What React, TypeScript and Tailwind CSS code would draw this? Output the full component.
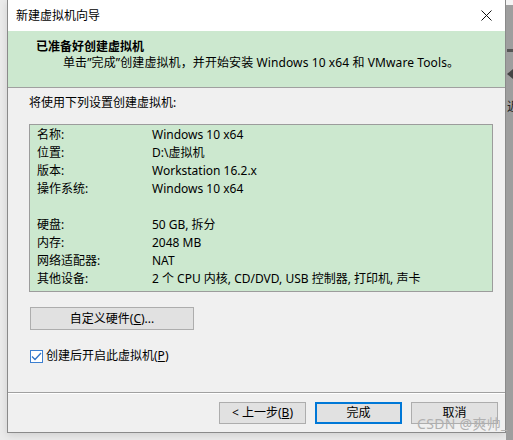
import React from 'react';

const font = { fontFamily: '"Noto Sans", "Noto Sans CJK SC", sans-serif' };

type Row = { label: string; value: string } | null;

const rows: Row[] = [
  { label: '名称:', value: 'Windows 10 x64' },
  { label: '位置:', value: 'D:\\虚拟机' },
  { label: '版本:', value: 'Workstation 16.2.x' },
  { label: '操作系统:', value: 'Windows 10 x64' },
  null,
  { label: '硬盘:', value: '50 GB, 拆分' },
  { label: '内存:', value: '2048 MB' },
  { label: '网络适配器:', value: 'NAT' },
  { label: '其他设备:', value: '2 个 CPU 内核, CD/DVD, USB 控制器, 打印机, 声卡' },
];

const WinButton: React.FC<{ children: React.ReactNode; primary?: boolean; className?: string }> = ({
  children,
  primary,
  className = '',
}) => (
  <button
    className={`h-[22px] bg-[#e1e1e1] text-[12px] text-black flex items-center justify-center leading-none ${
      primary ? 'border-2 border-[#0078d7]' : 'border border-[#adadad]'
    } ${className}`}
  >
    {children}
  </button>
);

export default function App() {
  return (
    <div className="w-[513px] h-[440px] bg-[#ebebeb] flex overflow-hidden relative" style={font}>
      <div className="w-[7px] shrink-0" />

      {/* wizard window */}
      <div className="w-[499px] h-[433px] shrink-0 flex flex-col bg-[#f0f0f0] border-x border-b border-[#8a8a8a] shadow-[0_2px_8px_rgba(0,0,0,0.12)]">
        {/* title bar */}
        <div className="h-[31px] bg-white flex items-center justify-between pl-[8px] pr-[9px] shrink-0">
          <span className="text-[12px] text-black">新建虚拟机向导</span>
          <svg width="11" height="11" viewBox="0 0 11 11" className="mr-[4px]">
            <path d="M0.5 0.5 L10.5 10.5 M10.5 0.5 L0.5 10.5" stroke="#111" strokeWidth="1" />
          </svg>
        </div>

        {/* header */}
        <div className="h-[57px] bg-[#cce8cf] border-b border-[#a0a0a0] shrink-0 flex flex-col pt-[7px]">
          <div className="pl-[28px] text-[12px] font-bold text-black leading-[18px]">已准备好创建虚拟机</div>
          <div className="pl-[55px] text-[12px] text-black leading-[18px] mt-[-2px] tracking-[0.1px]">
            单击”完成”创建虚拟机，并开始安装 Windows 10 x64 和 VMware Tools。
          </div>
        </div>

        {/* body */}
        <div className="flex-1 flex flex-col pt-[6px]">
          <div className="pl-[21px] text-[12px] leading-[18px] text-black">将使用下列设置创建虚拟机:</div>

          <div className="ml-[21px] mt-[12px] w-[464px] h-[168px] bg-[#cce8cf] border border-[#9c9c9c] pt-[1px] pl-[7px]">
            {rows.map((r, i) =>
              r ? (
                <div key={i} className="flex h-[18px] items-center text-[12px] text-black">
                  <span className="w-[115px] shrink-0">{r.label}</span>
                  <span>{r.value}</span>
                </div>
              ) : (
                <div key={i} className="h-[18px]" />
              )
            )}
          </div>

          <WinButton className="ml-[22px] mt-[15px] w-[164px] h-[23px]">
            自定义硬件(<span className="underline">C</span>)...
          </WinButton>

          <div className="ml-[22px] mt-[17px] flex items-center gap-[3px]">
            <div className="w-[13px] h-[13px] border border-[#3c7fd0] bg-white flex items-center justify-center">
              <svg width="11" height="9" viewBox="0 0 11 9">
                <path d="M1 4.5 L4 7.5 L10 1" stroke="#2f73c7" strokeWidth="1.3" fill="none" />
              </svg>
            </div>
            <span className="text-[12px] text-black leading-[18px]">
              创建后开启此虚拟机(<span className="underline">P</span>)
            </span>
          </div>
        </div>

        {/* footer */}
        <div className="h-[40px] shrink-0 border-t border-[#a0a0a0] flex flex-col">
          <div className="h-px bg-white" />
          <div className="flex justify-end gap-[9px] pr-[7px] pt-[8px]">
            <WinButton className="w-[87px]">
              &lt; 上一步(<span className="underline">B</span>)
            </WinButton>
            <WinButton primary className="w-[87px]">完成</WinButton>
            <WinButton className="w-[87px]">取消</WinButton>
          </div>
        </div>
      </div>

      {/* neighbouring window edge */}
      <div className="w-[7px] shrink-0 flex flex-col overflow-hidden">
        <div className="h-[5px] bg-[#f4f4f4]" />
        <div className="flex-1 bg-[#9e9e9e] relative overflow-hidden">
          <div className="absolute left-[1px] top-[44px] w-[8px] h-[3px] bg-[#555]" />
          <div className="absolute left-[1px] top-[64px] w-0 h-0 border-y-[5px] border-y-transparent border-r-[6px] border-r-[#444]" />
          <span className="absolute left-[1px] top-[96px] text-[12px] text-[#222] leading-none">近</span>
        </div>
      </div>

      {/* watermark */}
      <span className="absolute left-[417px] top-[417px] text-[14px] text-[#b0b0b0] leading-none tracking-[0.3px] whitespace-nowrap">
        CSDN @爽帅_
      </span>
    </div>
  );
}
